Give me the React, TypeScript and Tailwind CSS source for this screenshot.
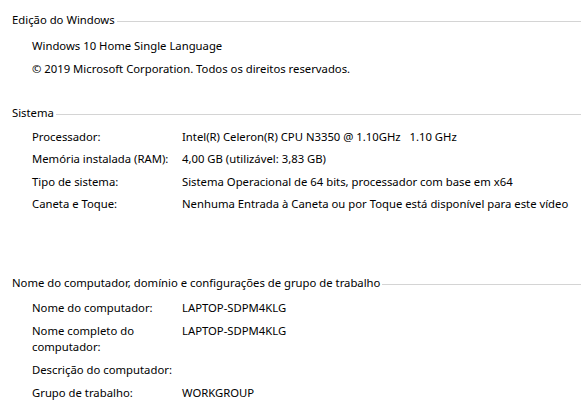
import React from "react";

function Heading({ title }: { title: string }) {
  return (
    <div className="flex items-center h-4 pl-3">
      <span className="whitespace-nowrap pr-[2px]">{title}</span>
      <div className="flex-1 h-px bg-[#d4d4d4] mt-[3px]" />
    </div>
  );
}

function Row({ label, value }: { label: string; value?: string }) {
  return (
    <div className="flex pl-8">
      <div className="w-[150px] shrink-0 pr-[4px]">{label}</div>
      <div className="flex-1 whitespace-pre">{value}</div>
    </div>
  );
}

export default function App() {
  return (
    <div
      className="w-[581px] h-[410px] bg-white text-black text-[11.3px] leading-4 overflow-hidden pt-[12px]"
      style={{ fontFamily: '"Noto Sans", "Open Sans", sans-serif' }}
    >
      <Heading title="Edição do Windows" />
      <div className="flex flex-col gap-[6.5px] pl-8 mt-[10px]">
        <div>Windows 10 Home Single Language</div>
        <div>© 2019 Microsoft Corporation. Todos os direitos reservados.</div>
      </div>

      <div className="mt-[28px]">
        <Heading title="Sistema" />
      </div>
      <div className="flex flex-col gap-[6.3px] mt-[8.5px]">
        <Row label="Processador:" value="Intel(R) Celeron(R) CPU N3350 @ 1.10GHz   1.10 GHz" />
        <Row label="Memória instalada (RAM):" value="4,00 GB (utilizável: 3,83 GB)" />
        <Row label="Tipo de sistema:" value="Sistema Operacional de 64 bits, processador com base em x64" />
        <Row label="Caneta e Toque:" value="Nenhuma Entrada à Caneta ou por Toque está disponível para este vídeo" />
      </div>

      <div className="mt-[63px]">
        <Heading title="Nome do computador, domínio e configurações de grupo de trabalho" />
      </div>
      <div className="flex flex-col gap-[7px] mt-[9px]">
        <Row label="Nome do computador:" value="LAPTOP-SDPM4KLG" />
        <Row label="Nome completo do computador:" value="LAPTOP-SDPM4KLG" />
        <Row label="Descrição do computador:" />
        <Row label="Grupo de trabalho:" value="WORKGROUP" />
      </div>
    </div>
  );
}
